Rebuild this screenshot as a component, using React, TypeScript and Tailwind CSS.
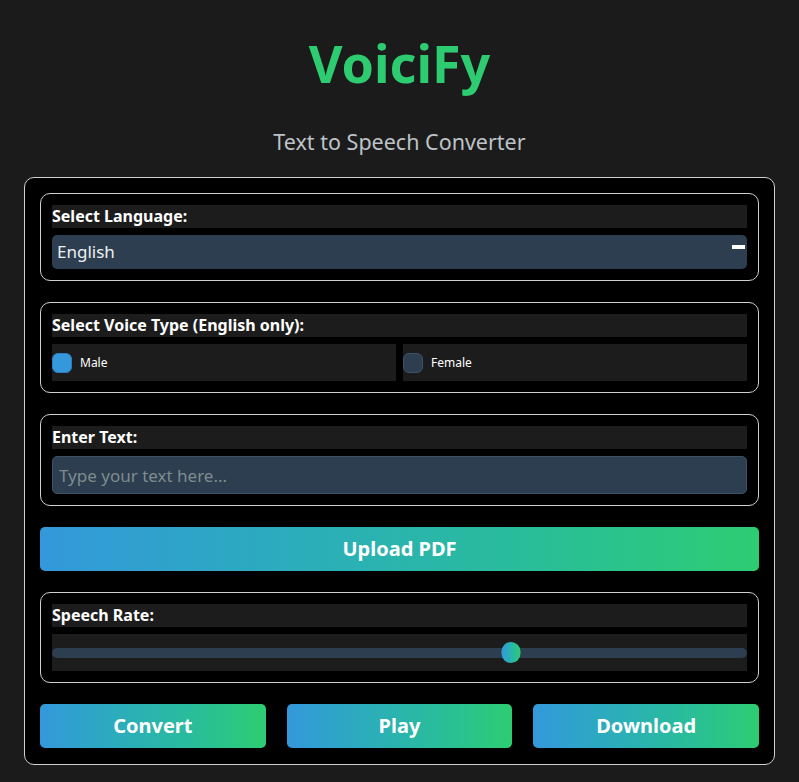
import { useState } from "react";

const font = { fontFamily: '"Noto Sans", "Open Sans", sans-serif' };

function Section({ label, children }: { label: string; children: React.ReactNode }) {
  return (
    <div className="rounded-[10px] border border-[#d0d0d0] px-[11px] pt-[11px] pb-[11px]">
      <div className="h-[23px] bg-[#1c1c1c] text-[16px] leading-[23px] font-bold text-white">{label}</div>
      <div className="mt-[7px]">{children}</div>
    </div>
  );
}

export default function App() {
  const [voice, setVoice] = useState("male");
  const [rate, setRate] = useState(66);

  return (
    <div className="min-h-[782px] bg-[#1b1b1b] pt-[27px]" style={font}>
      <h1 className="text-center text-[52px] leading-[72px] font-bold text-[#2ecc71]">VoiciFy</h1>
      <p className="mt-[30px] text-center text-[21.5px] leading-[26px] text-[#bdc3c7]">Text to Speech Converter</p>

      <div className="mx-[24px] mt-[22px] flex flex-col gap-[21px] rounded-[10px] border border-[#d0d0d0] bg-black px-[15px] pt-[15px] pb-[16px]">
        {/* idioma */}
        <Section label="Select Language:">
          <div className="relative flex h-[34px] items-center rounded-[5px] bg-[#2c3e50] pl-[5px] text-[17px] text-[#ecf0f1]">
            English
            <span className="absolute right-[2px] top-[10px] h-[4px] w-[13px] bg-white" />
          </div>
        </Section>

        {/* voz */}
        <Section label="Select Voice Type (English only):">
          <div className="grid grid-cols-2 gap-[7px]">
            {["male", "female"].map((v) => (
              <label
                key={v}
                onClick={() => setVoice(v)}
                className="flex h-[37px] cursor-pointer items-center gap-[8px] bg-[#1c1c1c] text-[12px] text-white"
              >
                <span
                  className={
                    voice === v
                      ? "h-[20px] w-[20px] rounded-[6px] border border-[#2b7fc0] bg-[#3498db]"
                      : "h-[20px] w-[20px] rounded-[6px] border border-[#3d5166] bg-[#2c3e50]"
                  }
                />
                {v === "male" ? "Male" : "Female"}
              </label>
            ))}
          </div>
        </Section>

        {/* texto */}
        <Section label="Enter Text:">
          <input
            placeholder="Type your text here..."
            className="block h-[38px] w-full rounded-[5px] border border-[#3d5166] bg-[#2c3e50] px-[6px] text-[17px] text-white outline-none placeholder:text-[#7f8c8d]"
          />
        </Section>

        <button className="h-[44px] rounded-[5px] bg-gradient-to-r from-[#3498db] to-[#2ecc71] text-[20px] font-bold text-white">
          Upload PDF
        </button>

        {/* velocidad */}
        <Section label="Speech Rate:">
          <div className="relative flex h-[37px] items-center bg-[#1c1c1c]">
            <div className="h-[10px] w-full rounded-full bg-[#2c3e50]" />
            <div
              className="absolute top-[8px] h-[21px] w-[19px] -translate-x-1/2 rounded-full bg-gradient-to-r from-[#3498db] to-[#2ecc71]"
              style={{ left: `${rate}%` }}
              onClick={() => setRate(rate)}
            />
          </div>
        </Section>

        <div className="grid grid-cols-3 gap-[21px]">
          {["Convert", "Play", "Download"].map((t) => (
            <button
              key={t}
              className="h-[44px] rounded-[5px] bg-gradient-to-r from-[#3498db] to-[#2ecc71] text-[20px] font-bold text-white"
            >
              {t}
            </button>
          ))}
        </div>
      </div>
    </div>
  );
}
